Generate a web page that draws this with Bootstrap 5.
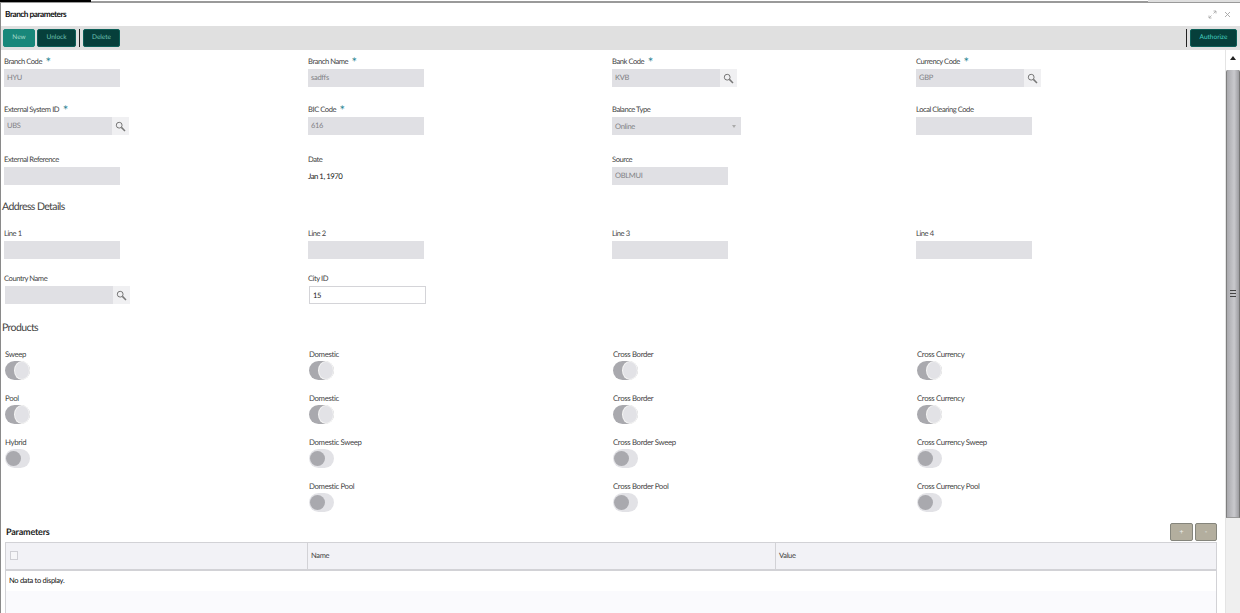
<!DOCTYPE html>
<html lang="en">
<head>
<meta charset="utf-8">
<title>Branch parameters</title>
<link href="https://cdn.jsdelivr.net/npm/bootstrap@5.3.0/dist/css/bootstrap.min.css" rel="stylesheet">
<style>
html,body{height:613px;overflow:hidden;background:#fff}
body{font-family:Lato,"Noto Sans",sans-serif;font-size:8px;color:#333;line-height:1.2;text-rendering:geometricPrecision}
button,input{text-rendering:geometricPrecision}
.topstrip{height:3px;background:#fff;border-bottom:2px solid #9a9a9a}
.toptab{width:91px;height:2px;background:#000}
.toptab2{width:92px;height:2px;background:#dfdfdf;margin-left:1148px;margin-top:-2px}
.shell{border-left:1px solid #8a8a8a;height:610px;display:flex;flex-direction:column}
.titlebar{height:23px;padding:0 9px 0 4px;font-size:8.3px;letter-spacing:-.5px;font-weight:700;color:#111;flex:none}
.winicons{color:#999;gap:7px}
.toolbar{height:24px;background:#e0e0e0;padding:0 3px 0 2px;flex:none}
.tb{font-size:6.5px;line-height:1;height:18px;padding:0;border-radius:2px;color:#6fc4b4;background:#063f3b;border:1px solid #0d5f58;--bs-btn-hover-bg:#063f3b}
.tb-new{width:32px;background:#18877a;border-color:#18877a;color:#a5dccb}
.tb-unlock{width:39px;margin-left:2px}
.tb-delete{width:37px}
.tb-auth{width:47px;color:#45d0c0}
.tsep{width:1px;height:18px;background:#222;margin:0 3px}
.bodyrow{flex:1;min-height:0}
.content{flex:1;min-width:0;padding:5px 0 0 3px;overflow:hidden}
.fgrid{display:grid;grid-template-columns:repeat(4,304px)}
.fld{height:32px}
.gap16{margin-bottom:16px}
.gap18{margin-bottom:18px}
.gap13{margin-bottom:13px}
.gap15{margin-bottom:15px}
.top13{margin-top:13px}
.lbl{display:block;height:14px;margin:0;font-size:7.6px;letter-spacing:-.45px;line-height:13px;color:#444;white-space:nowrap}
.req{color:#1f7f8f;font-size:13px;letter-spacing:0;line-height:8px;margin-left:2px;vertical-align:-3px}
.inp{display:block;width:116px;height:18px;padding:0 3px;font-size:7.5px;letter-spacing:-.3px;line-height:18px;border:0;border-radius:0;background:#e0e0e4;color:#808084}
.inp:disabled{background:#e0e0e4;color:#808084;opacity:1}
.look{width:125px;flex-wrap:nowrap}
.look .inp{width:108px;flex:none}
.lookshift{margin-left:1px}
.lookbtn{width:17px;height:18px;padding:0;border:0;border-radius:0;background:#f0f0f2;display:flex;align-items:center;justify-content:center}
.selbox{width:129px;height:18px;background:#e0e0e4;color:#808084;font-size:7.5px;letter-spacing:-.3px;padding:0 3px}
.caret{width:0;height:0;border-left:2px solid transparent;border-right:2px solid transparent;border-top:3px solid #aaa;margin-right:2px}
.sect{height:16px;font-size:10.5px;letter-spacing:-.6px;line-height:18px;color:#444;margin:0 0 0 -2px;font-weight:400}
.dateval{font-size:7.8px;letter-spacing:-.5px;line-height:18px;color:#222}
.white{background:#fff;border:1px solid #d4d4d8;color:#222;width:117px;height:18px;line-height:16px;margin-left:1px}
.tgrid{display:grid;grid-template-columns:repeat(4,304px);grid-auto-rows:44px}
.tcell{padding-left:1px}
.tlab{display:block;height:13px;margin:0;font-size:7.8px;letter-spacing:-.35px;line-height:12px;color:#444;white-space:nowrap}
.sw{width:25px;height:19px;border-radius:10px;background:#e2e2e6;position:relative;display:block}
.sw::after{content:"";position:absolute;top:2px;left:1px;width:15px;height:15px;border-radius:50%;background:#a9a9ae}
.sw.on{background:#a9a9ae}
.sw.on::after{left:10px;top:1px;width:14px;height:17px;background:#e2e2e6;box-shadow:0 0 0 1px #f4f4f4}
.paramhead{height:19px;margin-top:-1px;padding-right:8px;padding-left:2px}
.ptitle{font-size:9px;letter-spacing:-.2px;font-weight:700;color:#222;margin-top:4px}
.pbtn{width:23px;height:18px;padding:0;border-radius:2px;background:#b3ae9e;border:1px solid #85857c;color:#eee;font-size:7px;line-height:1}
.pbtn2{width:22px;margin-left:2px}
.tblwrap{margin:0 0 0 1px;width:1212px}
.dtbl{margin:0;table-layout:fixed;font-size:7.5px;letter-spacing:-.3px;--bs-table-bg:transparent;border-color:#d2d2d6}
.dtbl th{height:27px;background:#f2f2f6;font-weight:400;color:#444;padding:0 3px;vertical-align:middle;border:1px solid #d2d2d6;border-bottom-width:2px}
.dtbl td{border:0;padding:0 3px;height:20px;vertical-align:middle;color:#111;background:#fff}
.colcheck{width:302px}
.colname{width:468px}
.tbody2{height:31px;background:#fafafd;border-left:1px solid #d2d2d6;border-right:1px solid #d2d2d6}
.tblbody{border-left:1px solid #d2d2d6;border-right:1px solid #d2d2d6}
.cbx{display:block;width:8px;height:9px;margin-left:1px;border:1px solid #cfcfd4;background:#f6f6f8}
.sbar{width:15px;flex:none;background:#efefef;border-left:1px solid #e4e4e4}
.sup{height:20px;background:#fff;display:flex;justify-content:center;padding-top:6px}
.sup i{display:block;width:0;height:0;border-left:3px solid transparent;border-right:3px solid transparent;border-bottom:4px solid #222}
.thumb{height:448px;width:14px;background:linear-gradient(90deg,#a9a9ad,#c9c9cd 60%,#9d9da1);border-left:1px solid #7f7f7f;border-right:1px solid #777;border-radius:2px 2px 0 0;border-bottom:1px solid #999;display:flex;align-items:center;justify-content:center}
.grip{width:6px;height:7px;border-top:1px solid #444;border-bottom:1px solid #444;position:relative}
.grip::after{content:"";position:absolute;left:0;right:0;top:2px;height:1px;background:#444}
</style>
</head>
<body>
<div class="topstrip"><div class="toptab"></div><div class="toptab2"></div></div>
<div class="shell">
  <div class="titlebar d-flex align-items-center justify-content-between">
    <span>Branch parameters</span>
    <span class="winicons d-flex align-items-center">
      <svg width="9" height="9" viewBox="0 0 9 9"><path d="M1 8l2.5-2.5M1 5.5V8h2.5M8 1L5.5 3.5M5.5 1H8v2.5" fill="none" stroke="#a5a5a5" stroke-width=".8"/></svg>
      <svg width="7" height="7" viewBox="0 0 7 7"><path d="M1 1l5 5M6 1L1 6" stroke="#a5a5a5" stroke-width=".9"/></svg>
    </span>
  </div>
  <div class="toolbar d-flex align-items-center">
    <button type="button" class="btn tb tb-new">New</button>
    <button type="button" class="btn tb tb-unlock">Unlock</button>
    <span class="tsep"></span>
    <button type="button" class="btn tb tb-delete">Delete</button>
    <span class="tsep ms-auto"></span>
    <button type="button" class="btn tb tb-auth">Authorize</button>
  </div>
  <div class="bodyrow d-flex">
    <div class="content">
      <div class="fgrid gap16">
        <div class="fld"><label class="lbl">Branch Code <span class="req">*</span></label><input class="form-control inp" value="HYU" disabled></div>
        <div class="fld"><label class="lbl">Branch Name <span class="req">*</span></label><input class="form-control inp" value="sadffs" disabled></div>
        <div class="fld"><label class="lbl">Bank Code <span class="req">*</span></label><div class="d-flex look"><input class="form-control inp" value="KVB" disabled><button type="button" class="btn lookbtn" aria-label="Search"><svg width="11" height="11" viewBox="0 0 11 11"><circle cx="4.2" cy="4.2" r="2.9" fill="none" stroke="#777" stroke-width="1"/><path d="M6.4 6.4l3.6 3.6" stroke="#777" stroke-width="1.5"/></svg></button></div></div>
        <div class="fld"><label class="lbl">Currency Code <span class="req">*</span></label><div class="d-flex look"><input class="form-control inp" value="GBP" disabled><button type="button" class="btn lookbtn" aria-label="Search"><svg width="11" height="11" viewBox="0 0 11 11"><circle cx="4.2" cy="4.2" r="2.9" fill="none" stroke="#777" stroke-width="1"/><path d="M6.4 6.4l3.6 3.6" stroke="#777" stroke-width="1.5"/></svg></button></div></div>
      </div>
      <div class="fgrid gap18">
        <div class="fld"><label class="lbl">External System ID <span class="req">*</span></label><div class="d-flex look"><input class="form-control inp" value="UBS" disabled><button type="button" class="btn lookbtn" aria-label="Search"><svg width="11" height="11" viewBox="0 0 11 11"><circle cx="4.2" cy="4.2" r="2.9" fill="none" stroke="#777" stroke-width="1"/><path d="M6.4 6.4l3.6 3.6" stroke="#777" stroke-width="1.5"/></svg></button></div></div>
        <div class="fld"><label class="lbl">BIC Code <span class="req">*</span></label><input class="form-control inp" value="616" disabled></div>
        <div class="fld"><label class="lbl">Balance Type</label><div class="selbox d-flex align-items-center justify-content-between"><span>Online</span><span class="caret"></span></div></div>
        <div class="fld"><label class="lbl">Local Clearing Code</label><input class="form-control inp" disabled></div>
      </div>
      <div class="fgrid gap13">
        <div class="fld"><label class="lbl">External Reference</label><input class="form-control inp" disabled></div>
        <div class="fld"><label class="lbl">Date</label><div class="dateval">Jan 1, 1970</div></div>
        <div class="fld"><label class="lbl">Source</label><input class="form-control inp" value="OBLMUI" disabled></div>
        <div></div>
      </div>
      <h5 class="sect">Address Details</h5>
      <div class="fgrid top13 gap13">
        <div class="fld"><label class="lbl">Line 1</label><input class="form-control inp" disabled></div>
        <div class="fld"><label class="lbl">Line 2</label><input class="form-control inp" disabled></div>
        <div class="fld"><label class="lbl">Line 3</label><input class="form-control inp" disabled></div>
        <div class="fld"><label class="lbl">Line 4</label><input class="form-control inp" disabled></div>
      </div>
      <div class="fgrid gap15">
        <div class="fld"><label class="lbl">Country Name</label><div class="d-flex look lookshift"><input class="form-control inp" disabled><button type="button" class="btn lookbtn" aria-label="Search"><svg width="11" height="11" viewBox="0 0 11 11"><circle cx="4.2" cy="4.2" r="2.9" fill="none" stroke="#777" stroke-width="1"/><path d="M6.4 6.4l3.6 3.6" stroke="#777" stroke-width="1.5"/></svg></button></div></div>
        <div class="fld"><label class="lbl">City ID</label><input class="form-control inp white" value="15"></div>
        <div></div><div></div>
      </div>
      <h5 class="sect">Products</h5>
      <div class="tgrid top13">
        <div class="tcell"><span class="tlab">Sweep</span><span class="sw on"></span></div>
        <div class="tcell"><span class="tlab">Domestic</span><span class="sw on"></span></div>
        <div class="tcell"><span class="tlab">Cross Border</span><span class="sw on"></span></div>
        <div class="tcell"><span class="tlab">Cross Currency</span><span class="sw on"></span></div>
        <div class="tcell"><span class="tlab">Pool</span><span class="sw on"></span></div>
        <div class="tcell"><span class="tlab">Domestic</span><span class="sw on"></span></div>
        <div class="tcell"><span class="tlab">Cross Border</span><span class="sw on"></span></div>
        <div class="tcell"><span class="tlab">Cross Currency</span><span class="sw on"></span></div>
        <div class="tcell"><span class="tlab">Hybrid</span><span class="sw"></span></div>
        <div class="tcell"><span class="tlab">Domestic Sweep</span><span class="sw"></span></div>
        <div class="tcell"><span class="tlab">Cross Border Sweep</span><span class="sw"></span></div>
        <div class="tcell"><span class="tlab">Cross Currency Sweep</span><span class="sw"></span></div>
        <div></div>
        <div class="tcell"><span class="tlab">Domestic Pool</span><span class="sw"></span></div>
        <div class="tcell"><span class="tlab">Cross Border Pool</span><span class="sw"></span></div>
        <div class="tcell"><span class="tlab">Cross Currency Pool</span><span class="sw"></span></div>
      </div>
      <div class="paramhead d-flex align-items-start justify-content-between">
        <span class="ptitle">Parameters</span>
        <span class="d-flex"><button type="button" class="btn pbtn">+</button><button type="button" class="btn pbtn pbtn2">-</button></span>
      </div>
      <div class="tblwrap">
        <table class="table dtbl">
          <thead><tr><th class="colcheck"><span class="cbx"></span></th><th class="colname">Name</th><th>Value</th></tr></thead>
        </table>
        <div class="tblbody"><table class="table dtbl"><tbody><tr><td>No data to display.</td></tr></tbody></table></div>
        <div class="tbody2"></div>
      </div>
    </div>
    <div class="sbar"><div class="sup"><i></i></div><div class="thumb"><span class="grip"></span></div></div>
  </div>
</div>
<script src="https://cdn.jsdelivr.net/npm/bootstrap@5.3.0/dist/js/bootstrap.bundle.min.js"></script>
</body>
</html>
